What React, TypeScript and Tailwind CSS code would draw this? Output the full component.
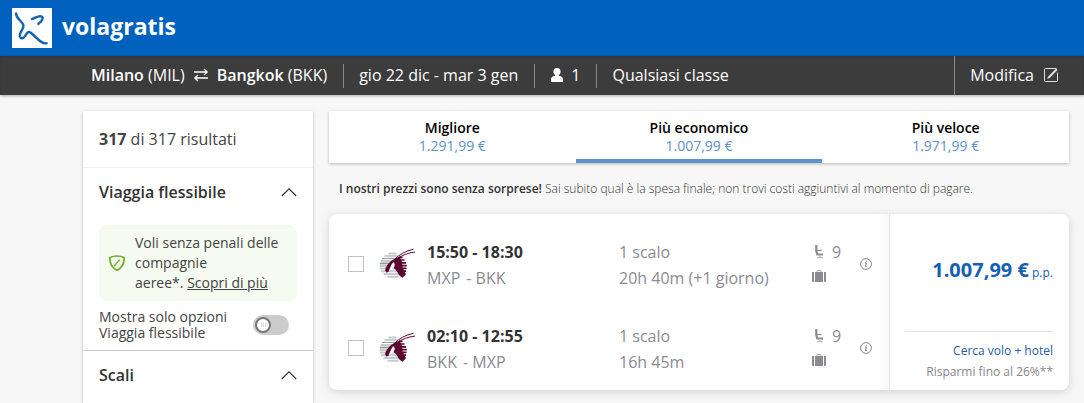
import React, { useState } from 'react';

const tabs = [
  { id: 'best', label: 'Migliore', price: '1.291,99 €' },
  { id: 'cheap', label: 'Più economico', price: '1.007,99 €' },
  { id: 'fast', label: 'Più veloce', price: '1.971,99 €' },
];

const flights = [
  { id: 'out', time: '15:50 - 18:30', from: 'MXP', to: 'BKK', stops: '1 scalo', duration: '20h 40m (+1 giorno)', seats: 9 },
  { id: 'back', time: '02:10 - 12:55', from: 'BKK', to: 'MXP', stops: '1 scalo', duration: '16h 45m', seats: 9 },
];

const BrandIcon = () => (
  <svg viewBox="0 0 40 40" className="size-10 bg-white" fill="none" stroke="#1565ae" strokeWidth="2.4" strokeLinecap="round" strokeLinejoin="round" aria-hidden="true">
    <path d="M4 5.500C4.400 9 6 10.500 8.500 13c3.300 3.300 3.600 4.800 2 8C9 24 7.200 25.500 7.800 28.300c.8 3 3.400 2.500 5.400-.5 2.300-3.500 3.200-4.800 5.300-3.300L28 33c2.500 2.200 4 2.900 6.600 2.200" />
    <path d="M20 11c3-.6 5.800-3.500 9-2.700 2.800.9 1.400 3.400.2 5-.9 1.100-2.400 1.700-2.800 2.700" />
  </svg>
);

const SwapIcon = () => (
  <svg viewBox="0 0 16 16" className="size-4" fill="none" stroke="currentColor" strokeWidth="1.300" aria-hidden="true">
    <path d="M1 5h13M11 2l3.200 3L11 8M15 11H2M5 8l-3.200 3L5 14" />
  </svg>
);

const PersonIcon = () => (
  <svg viewBox="0 0 12 14" className="h-3.5 w-3" fill="currentColor" aria-hidden="true">
    <path d="M6 0a3.600 3.600 0 0 1 3.600 3.600C9.600 5.300 9 6.300 8 7.100v.7c2.600.3 4 1.500 4 3.900V14H0v-2.300c0-2.400 1.400-3.600 4-3.900v-.7c-1-.8-1.600-1.800-1.600-3.500A3.600 3.600 0 0 1 6 0z" />
  </svg>
);

const EditIcon = () => (
  <svg viewBox="0 0 14 14" className="size-3.5" fill="none" stroke="#dedede" aria-hidden="true">
    <path d="M13.500 4.500v8a1 1 0 0 1-1 1h-11a1 1 0 0 1-1-1v-11a1 1 0 0 1 1-1h11" />
    <path d="M5 9.300 12.800 1.300" strokeWidth="2" />
    <path d="m3.300 10.800.8-2.600 1.900 1.800z" fill="#dedede" stroke="none" />
  </svg>
);

const ChevronUp = () => (
  <svg viewBox="0 0 16 10" className="h-2.5 w-4" fill="none" stroke="#333" strokeWidth="1.200" aria-hidden="true">
    <path d="M.8 9 8 1.800 15.200 9" />
  </svg>
);

const ShieldIcon = () => (
  <svg viewBox="0 0 16 16" className="size-4 shrink-0" fill="none" stroke="#6ab023" aria-hidden="true">
    <path d="M8 1C5.500 1 3 1.500.9 2.500.6 8.500 3.400 13 8 15.200 12.600 13 15.400 8.500 15.100 2.500 13 1.500 10.500 1 8 1z" strokeWidth="1.700" />
    <path d="M5 11.300 10.800 4.600" strokeWidth="1.300" />
  </svg>
);

const AirlineLogo = () => (
  <svg viewBox="0 0 36 32" className="h-8 w-9" role="img" aria-label="Qatar Airways">
    <g stroke="#8d9a9f" strokeWidth="1.200">
      <path d="M9.500 5.500h8M5.500 8h13M3 10.500h14M1.500 13h13M.8 15.500h11M.5 18h9" />
    </g>
    <g stroke="#c3cbce" strokeWidth="2">
      <path d="M10 5.500h7M.8 20.500h18M2 23.300h17M4.500 26h15M8.500 28.800h11" />
      <path d="M1.500 14.300h11M1 16.800h9" strokeWidth="1" />
    </g>
    <g stroke="#5c0632" strokeWidth="1.700">
      <path d="M20 9.300h3.500M19 12h6.500M18 14.800h9M18 17.600h9.800M18 20.400h9.500M18 23.200h9" />
    </g>
    <path d="M6 22.300c.7-3.300 3-7 6.300-9.600 2.400-1.600 5.200-3 8.200-4.200l2.500 5.500.7 6 3.300 6.300-3.500 3.400c-2.500-1.400-4.400-3.400-5.300-6l-2-2.400-2-1.500-3 2.700-3.500 2.300z" fill="#5c0632" />
    <path d="M14.500 14.300c-2 1.200-2.300 3.700-5 9 3.200-.7 6-3.800 6.200-6.300.2-1.300-.4-2-1.200-2.700z" fill="#fff" />
    <path d="M15.500 11.500C20 6.500 26.500 3 34.500 1.200M18 11C23 7 29 5 36 4" fill="none" stroke="#5c0632" strokeWidth="1" />
  </svg>
);

const SeatIcon = () => (
  <svg viewBox="0 0 9 14" className="h-3.5 w-[9px]" fill="none" stroke="#8b8b91" aria-hidden="true">
    <path d="M1.300 0v6l1 3.500h5.700" strokeWidth="2.200" />
    <path d="M2 5.500h4.500" strokeWidth="1.200" />
    <path d="M5 11v1.500M2.500 13.500v-1h5v1" stroke="#b5b5b9" strokeWidth="1" />
  </svg>
);

const SuitcaseIcon = () => (
  <svg viewBox="0 0 14 12" className="h-3 w-3.5" fill="#8b8b91" aria-hidden="true">
    <path d="M0 2h2v10H.8L0 11.200zM3 2h8v10H3zM12 2h2v9.200l-.8.8H12z" />
    <path d="M5 2V.5h4V2" fill="none" stroke="#b5b5b9" />
  </svg>
);

const InfoIcon = () => (
  <svg viewBox="0 0 12 12" className="size-3" fill="none" stroke="#77777c" aria-hidden="true">
    <circle cx="6" cy="6" r="5.400" strokeWidth=".9" />
    <path d="M5 5h1.300l-.7 3.500h1.100M6.300 2.800v1" strokeWidth="1" />
  </svg>
);

const SectionTitle = ({ title }: { title: string }) => (
  <button type="button" className="flex h-12 w-full items-center justify-between px-4">
    <span className="text-base font-semibold">{title}</span>
    <ChevronUp />
  </button>
);

const Header = () => (
  <header>
    <div className="flex h-14 items-center bg-[#0062be] px-3">
      <a href="#" className="flex items-center gap-2.5 text-white">
        <BrandIcon />
        <span className="pb-1 text-[23px] leading-8 font-bold">volagratis</span>
      </a>
    </div>
    <div className="flex h-[39px] items-center bg-[#3c3c3c] pl-[91px] text-base whitespace-nowrap text-white shadow-[0_1px_3px_rgba(0,0,0,0.3),inset_0_2px_3px_-1px_rgba(0,0,0,0.15)]">
      <div className="flex items-center gap-2 pr-4 pb-0.5">
        <span><b className="font-semibold">Milano</b> (MIL)</span>
        <SwapIcon />
        <span><b className="font-semibold">Bangkok</b> (BKK)</span>
      </div>
      <div className="flex h-6 items-center border-l border-[#888] pr-4 pb-0.5 pl-[15px]">gio 22 dic - mar 3 gen</div>
      <div className="flex h-6 items-center gap-2 border-l border-[#888] pr-4 pb-0.5 pl-4">
        <PersonIcon />
        1
      </div>
      <div className="flex h-6 items-center border-l border-[#888] pr-4 pb-0.5 pl-[15px]">Qualsiasi classe</div>
      <button type="button" className="ml-auto flex h-full items-center gap-2.5 border-l border-[#888] pr-[26px] pb-0.5 pl-[15px]">
        Modifica
        <EditIcon />
      </button>
    </div>
  </header>
);

const Sidebar = () => {
  const [flexible, setFlexible] = useState(false);

  return (
    <aside className="w-[230px] shrink-0 bg-white text-[#333] shadow-[0_1px_3px_rgba(0,0,0,0.25)]">
      <p className="flex h-14 items-center px-4 text-base text-[#444]">
        <span><b className="font-bold">317</b> di 317 risultati</span>
      </p>
      <section className="border-t border-[#f0f0f0]">
        <SectionTitle title="Viaggia flessibile" />
        <div className="mx-4 mt-[9px] flex items-center gap-2.5 rounded-lg bg-[#f5fbf0] py-2 pr-2 pl-2.5 text-sm text-[#444]">
          <ShieldIcon />
          <p>
            Voli senza penali delle compagnie <br />
            aeree*. <a href="#" className="underline">Scopri di più</a>
          </p>
        </div>
        <label className="flex items-center justify-between pt-2 pr-6 pb-[9px] pl-4 text-sm leading-4 text-[#444]">
          <span className="w-36">Mostra solo opzioni Viaggia flessibile</span>
          <input
            type="checkbox"
            checked={flexible}
            onChange={(e) => setFlexible(e.target.checked)}
            className="flex h-5 w-9 appearance-none items-center rounded-full bg-[#ccc] px-0.5 before:size-4 before:rounded-full before:border-2 before:border-[#777] before:bg-white before:bg-[repeating-linear-gradient(90deg,#ddd_0_1px,#fff_1px_2px)] before:bg-[length:5px_4px] before:bg-center before:bg-no-repeat before:content-[''] checked:justify-end"
          />
        </label>
      </section>
      <section className="border-t border-[#ccc]">
        <SectionTitle title="Scali" />
      </section>
    </aside>
  );
};

const SortTabs = () => {
  const [active, setActive] = useState('cheap');

  return (
    <div className="grid grid-cols-3 bg-white shadow-[0_1px_3px_rgba(0,0,0,0.25)]">
      {tabs.map((tab) => (
        <button
          key={tab.id}
          type="button"
          onClick={() => setActive(tab.id)}
          className={`flex h-[52px] flex-col items-center border-b-4 pt-2 text-sm leading-[18px] ${active === tab.id ? 'border-[#5c93cb]' : 'border-transparent'}`}
        >
          <span className="font-semibold text-black">{tab.label}</span>
          <span className="text-[#5c93cb]">{tab.price}</span>
        </button>
      ))}
    </div>
  );
};

const FlightRow = ({ flight }: { flight: (typeof flights)[number] }) => (
  <div className="flex h-[84px] items-center pr-[17px] pl-[19px] text-base leading-[26px] text-[#8b8b91]">
    <input
      type="checkbox"
      aria-label={`Seleziona ${flight.time}`}
      className="size-4 shrink-0 appearance-none border border-[#c4c4c4] bg-white checked:bg-[#0062be]"
    />
    <div className="ml-[15px] shrink-0">
      <AirlineLogo />
    </div>
    <div className="ml-3 w-48 shrink-0 pt-0.5">
      <p className="font-bold text-[#333]">{flight.time}</p>
      <p className="flex gap-1.5"><span>{flight.from}</span><span>- {flight.to}</span></p>
    </div>
    <div className="min-w-0 flex-1 pt-0.5">
      <p>{flight.stops}</p>
      <p>{flight.duration}</p>
    </div>
    <div className="w-12 shrink-0 pt-0.5">
      <div className="flex items-center gap-2 pl-[3px]">
        <SeatIcon />
        {flight.seats}
      </div>
      <div className="flex h-[26px] items-center pb-1">
        <SuitcaseIcon />
      </div>
    </div>
    <button type="button" aria-label="Dettagli">
      <InfoIcon />
    </button>
  </div>
);

const ResultCard = () => (
  <article className="flex rounded-lg bg-white shadow-[0_2px_10px_rgba(0,0,0,0.15)]">
    <div className="flex-1 rounded-l-lg bg-linear-to-l from-[#f8f8f8] to-transparent to-[12px] pt-2">
      {flights.map((flight) => (
        <FlightRow key={flight.id} flight={flight} />
      ))}
    </div>
    <div className="flex w-[180px] shrink-0 flex-col justify-between rounded-r-lg border-l border-[#e6e6e6] pt-[42px] pr-4 pb-2 pl-[15px] text-right text-xs">
      <p className="whitespace-nowrap text-[#1660b3]">
        <b className="text-xl leading-7 font-bold">1.007,99 €</b> p.p.
      </p>
      <div className="border-t border-[#e3e3e3] pt-2 leading-[21px]">
        <a href="#" className="text-[#1f5ea8]">Cerca volo + hotel</a>
        <p className="text-[#888]">Risparmi fino al 26%**</p>
      </div>
    </div>
  </article>
);

export default function App() {
  return (
    <div className="flex min-h-screen flex-col bg-[#f7f7f7] font-['Open_Sans',sans-serif]">
      <Header />
      <div className="flex flex-1 gap-4 pt-4 pr-[15px] pl-[83px]">
        <Sidebar />
        <main className="min-w-0 flex-1">
          <SortTabs />
          <p className="px-2.5 pt-[17px] pb-4 text-xs leading-[18px] font-light text-[#333]">
            <b className="font-semibold">I nostri prezzi sono senza sorprese!</b> Sai subito qual è la spesa finale; non trovi costi aggiuntivi al momento di pagare.
          </p>
          <ResultCard />
        </main>
      </div>
    </div>
  );
}
